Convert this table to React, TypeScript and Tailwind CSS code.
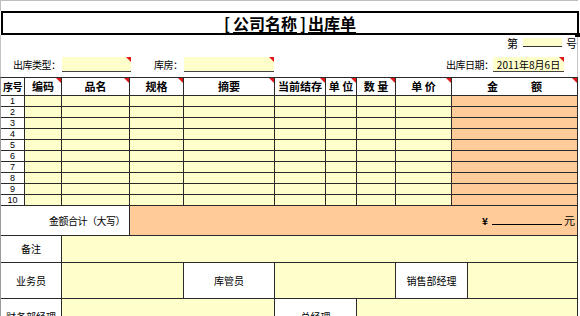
import React from "react";

const Tri = () => (
  <span className="absolute top-0 right-0 w-0 h-0 border-l-[5px] border-l-transparent border-t-[5px] border-t-[#e01818]" />
);

const headers: { t: string; tri: boolean }[] = [
  { t: "序号", tri: false },
  { t: "编码", tri: true },
  { t: "品名", tri: true },
  { t: "规格", tri: true },
  { t: "摘要", tri: true },
  { t: "当前结存", tri: true },
  { t: "单 位", tri: true },
  { t: "数 量", tri: true },
  { t: "单 价", tri: true },
  { t: "金　　　额", tri: true },
];

const rows = [1, 2, 3, 4, 5, 6, 7, 8, 9, 10];

export default function App() {
  const line = "border-[#2a2a2a]";
  return (
    <div className="w-[580px] h-[316px] overflow-hidden bg-white text-black font-['Noto_Sans_CJK_SC','Noto_Sans',sans-serif] relative">
      {/* top gridline strip */}
      <div className="h-[11px] w-[578px] border-t border-l border-[#bdbdbd]" />
      {/* title */}
      <div className="ml-[1px] w-[578px] h-[24px] border-2 border-black flex items-center justify-center">
        <span className="text-[16px] leading-[18px] font-bold underline underline-offset-[2px] whitespace-nowrap">
          <span className="mr-[3px]">[</span>公司名称<span className="ml-[3px] mr-[2px]">]</span>出库单
        </span>
      </div>
      <div className="absolute left-[575px] top-[33px] w-[5px] h-[4px] bg-black" />
      {/* info section */}
      <div className="w-[578px] border-l border-r border-[#c4c4c4]">
        <div className="h-[16px] flex items-start pl-[506px] text-[11px] whitespace-nowrap">
          <span className="mt-[2px] leading-[12px] w-[11px]">第</span>
          <span className="ml-[5px] mt-[3px] w-[40px] h-[9px] bg-[#ffffcc] border-b border-[#333]" />
          <span className="ml-[4px] mt-[2px] leading-[12px]">号</span>
        </div>
        <div className="h-[26px] flex items-start pl-[12px] text-[10px] tracking-[-0.5px] whitespace-nowrap">
          <span className="mt-[6px] w-[49px] leading-[15px]">出库类型：</span>
          <span className="relative mt-[6px] w-[69px] h-[15px] bg-[#ffffcc] border-b border-[#444]">
            <Tri />
          </span>
          <span className="ml-[23px] mt-[6px] w-[30px] leading-[15px]">库房：</span>
          <span className="relative mt-[6px] w-[90px] h-[15px] bg-[#ffffcc] border-b border-[#444]">
            <Tri />
          </span>
          <span className="ml-[172px] mt-[6px] w-[47px] leading-[15px]">出库日期：</span>
          <span className="relative mt-[6px] w-[71px] h-[15px] bg-[#ffffcc] border-b border-[#444] flex items-end justify-center text-[10px] tracking-normal leading-[12px]">
            2011年8月6日
            <Tri />
          </span>
        </div>
      </div>
      {/* main table */}
      <div className="w-[578px] grid grid-cols-[24px_37px_68px_54px_91px_51px_31px_39px_56px_126px] border-t border-l border-t-[#2a2a2a] border-l-[#9a9a9a]">
        {headers.map((h, i) => (
          <div
            key={i}
            className={`relative h-[18px] bg-white border-r border-b ${line} flex items-center justify-center font-bold leading-none whitespace-pre ${
              i === 0 ? "text-[10px] tracking-[-0.5px]" : "text-[11px]"
            }`}
          >
            {h.t}
            {h.tri && <Tri />}
          </div>
        ))}
        {rows.map((r) => (
          <React.Fragment key={r}>
            <div className={`h-[11px] bg-white border-r border-b ${line} flex items-center justify-center font-['Liberation_Sans',sans-serif] text-[9px] leading-[9px]`}>
              {r}
            </div>
            <div className={`h-[11px] bg-[#ffffcc] border-r border-b ${line}`} />
            <div className={`h-[11px] bg-[#ffffcc] border-r border-b ${line}`} />
            <div className={`h-[11px] bg-[#ffffcc] border-r border-b ${line}`} />
            <div className={`h-[11px] bg-[#ffffcc] border-r border-b ${line}`} />
            <div className={`h-[11px] bg-[#ffffcc] border-r border-b ${line}`} />
            <div className={`h-[11px] bg-[#ffffcc] border-r border-b ${line}`} />
            <div className={`h-[11px] bg-[#ffffcc] border-r border-b ${line}`} />
            <div className={`h-[11px] bg-[#ffffcc] border-r border-b ${line}`} />
            <div className={`h-[11px] bg-[#ffcc99] border-r border-b ${line}`} />
          </React.Fragment>
        ))}
      </div>
      {/* totals and signatures */}
      <div className="w-[578px] border-l border-[#9a9a9a] text-[10px] whitespace-nowrap">
        <div className="flex h-[30px]">
          <div className={`w-[129px] bg-white border-r border-b ${line} flex items-center justify-end pr-[4px] leading-none tracking-[-0.5px]`}>
            金额合计（大写）
          </div>
          <div className={`w-[448px] bg-[#ffcc99] border-r border-b ${line} flex items-center justify-end pr-[2px] leading-none`}>
            <span className="text-[10px] font-bold">¥</span>
            <span className="ml-[4px] w-[70px] h-[1px] bg-black mt-[8px]" />
            <span className="ml-[2px] text-[11px]">元</span>
          </div>
        </div>
        <div className="flex h-[27px]">
          <div className={`w-[61px] bg-white border-r border-b ${line} flex items-center justify-center leading-none`}>备注</div>
          <div className={`w-[516px] bg-[#ffffcc] border-r border-b ${line}`} />
        </div>
        <div className="flex h-[36px]">
          <div className={`w-[61px] bg-white border-r border-b ${line} flex items-center justify-center leading-none`}>业务员</div>
          <div className={`w-[122px] bg-[#ffffcc] border-r border-b ${line}`} />
          <div className={`w-[91px] bg-white border-r border-b ${line} flex items-center justify-center leading-none`}>库管员</div>
          <div className={`w-[121px] bg-[#ffffcc] border-r border-b ${line}`} />
          <div className={`w-[72px] bg-white border-r border-b ${line} flex items-center justify-center leading-none`}>销售部经理</div>
          <div className={`w-[110px] bg-[#ffffcc] border-r border-b ${line}`} />
        </div>
        <div className="flex h-[36px]">
          <div className={`w-[61px] bg-white border-r border-b ${line} flex items-center justify-center leading-none`}>财务部经理</div>
          <div className={`w-[213px] bg-[#ffffcc] border-r border-b ${line}`} />
          <div className={`w-[82px] bg-white border-r border-b ${line} flex items-center justify-center leading-none`}>总经理</div>
          <div className={`w-[221px] bg-[#ffffcc] border-r border-b ${line}`} />
        </div>
      </div>
    </div>
  );
}
